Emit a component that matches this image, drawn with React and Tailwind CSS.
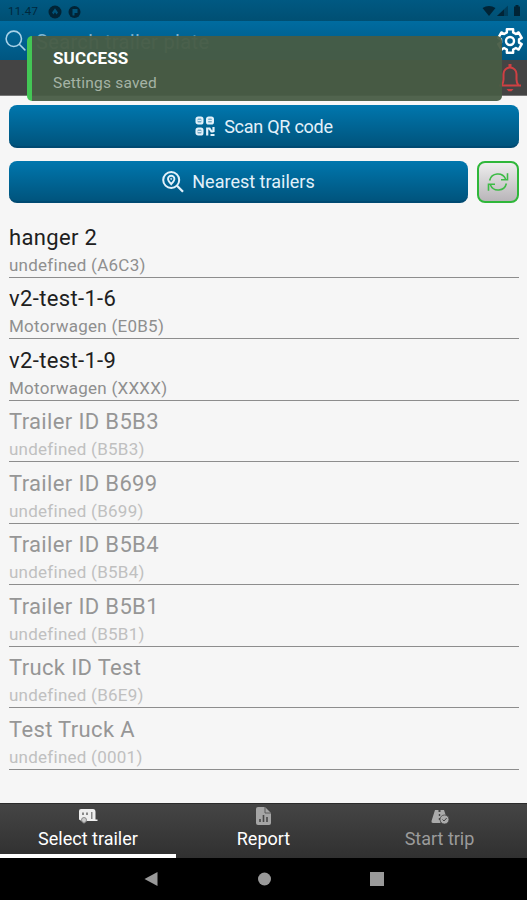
import React from 'react';
import { IoSearchOutline } from 'react-icons/io5';

const trailers = [
  { name: 'hanger 2', info: 'undefined (A6C3)', active: true },
  { name: 'v2-test-1-6', info: 'Motorwagen (E0B5)', active: true },
  { name: 'v2-test-1-9', info: 'Motorwagen (XXXX)', active: true },
  { name: 'Trailer ID B5B3', info: 'undefined (B5B3)' },
  { name: 'Trailer ID B699', info: 'undefined (B699)' },
  { name: 'Trailer ID B5B4', info: 'undefined (B5B4)' },
  { name: 'Trailer ID B5B1', info: 'undefined (B5B1)' },
  { name: 'Truck ID Test', info: 'undefined (B6E9)' },
  { name: 'Test Truck A', info: 'undefined (0001)' },
];

function GearIcon() {
  return (
    <svg width="28" height="30" viewBox="0 0 30 30" fill="none" stroke="#fff" strokeWidth="2.6" strokeLinejoin="round">
      <path d="M18.350 5.790L21.300 7.490 24.190 5.810 27.560 11.630 24.650 13.300V16.700L27.560 18.370 24.190 24.190 21.300 22.510 18.350 24.210 18.370 27.560H11.630L11.650 24.210 8.700 22.510 5.810 24.190 2.440 18.370 5.350 16.700V13.300L2.440 11.630 5.810 5.810 8.700 7.490 11.650 5.790 11.630 2.440H18.370z" />
      <circle cx="15" cy="15" r="4.300" />
    </svg>
  );
}

function BellIcon() {
  return (
    <svg width="26" height="30" viewBox="0 0 26 30" fill="none" stroke="#cf4043" strokeWidth="2">
      <path d="M13 1v3" strokeWidth="3" />
      <path d="M2 22.500h22M4.500 22.500c1.500-2 2-3.500 2-6V11a6.500 6.500 0 0 1 13 0v5.500c0 2.500 0.500 4 2 6" />
      <path d="M9.500 26h7l-2 2.200h-3z" fill="#cf4043" stroke="none" />
    </svg>
  );
}

function QrIcon() {
  return (
    <svg width="20" height="20" viewBox="0 0 20 20" fill="none" stroke="#e3f1fa" strokeWidth="2.200">
      <rect x="1.600" y="1.600" width="5.800" height="5.800" rx="1.500" />
      <rect x="12.100" y="1.600" width="5.800" height="5.800" rx="1.500" />
      <rect x="1.600" y="12.600" width="5.800" height="5.800" rx="1.500" />
      <path d="M2.500 4.500h4M13 4.500h4M2.500 15.500h4" strokeWidth="1.800" />
      <path d="M12.200 19.500v-8M12 12.500h2.500l2 3h2M18.500 11v5M15.500 19h4" />
    </svg>
  );
}

function NearestIcon() {
  return (
    <svg width="22" height="22" viewBox="0 0 22 22" fill="none" stroke="#e3f1fa" strokeWidth="2">
      <circle cx="9.200" cy="9" r="8" />
      <path d="M15 14.800l6 6" strokeWidth="2.300" />
      <path d="M9.200 13.200c-2.200-2.600-3.200-4-3.200-5.300a3.200 3.200 0 0 1 6.400 0c0 1.300-1 2.700-3.200 5.300z" strokeWidth="1.900" />
      <circle cx="9.200" cy="7.900" r="0.600" strokeWidth="1" />
    </svg>
  );
}

function RefreshIcon() {
  return (
    <svg width="22" height="20" viewBox="0 0 22 20" fill="none" stroke="#3dbb46" strokeWidth="1.600">
      <path d="M2.600 8.500a8.500 8.500 0 0 1 16-1.500M19.400 11.500a8.500 8.500 0 0 1-16 1.500" />
      <path d="M20.500 1.200v6.500h-6.500M1.500 18.800v-6.500H8" />
    </svg>
  );
}

function StatusBar() {
  return (
    <div className="h-[21px] flex items-center bg-gradient-to-b from-[#005982] to-[#004f73] px-2 text-[#01283c]">
      <span className="w-[31px] text-[11.500px] leading-none tracking-[0.300px] mt-0.5">11.47</span>
      <svg className="ml-[9px] mt-0.5" width="14" height="14" viewBox="0 0 14 14">
        <circle cx="7" cy="7" r="6.500" fill="#012436" />
        <path d="M7 3.200L10 7.600 8.500 9.500 7 7.200 5.500 9.500 4 7.600z" fill="#00547a" />
      </svg>
      <svg className="ml-[6px] mt-0.5" width="13" height="14" viewBox="0 0 13 14">
        <circle cx="6.500" cy="7" r="6" fill="#012436" />
        <path d="M4.500 4h5v4h-3v2.500h-2z" fill="#00547a" />
      </svg>
      <svg className="ml-auto mr-[-3px]" width="40" height="14" viewBox="0 0 40 14" fill="#012436">
        <path d="M0.500 4Q7 0 13.500 4L7 12z" />
        <path d="M15 12L26 1.500V12z" opacity="0.450" />
        <path d="M15 12L22 5.500V12z" />
        <path d="M32 2.500h1.500V1h3v1.500H38V12h-6z" />
      </svg>
    </div>
  );
}

function Toast() {
  return (
    <div className="absolute left-[27px] top-[36px] w-[475px] h-[65px] rounded-[5px] border-l-[5px] border-[#43c655] bg-[rgba(72,92,69,0.95)] bg-clip-padding pl-[21px] pt-[12px]">
      <div className="text-[17px] leading-[20px] tracking-[0.150px] font-bold text-white">SUCCESS</div>
      <div className="mt-[5px] text-[15.500px] leading-[20px] tracking-[0.200px] text-[#a5b3a5]">Settings saved</div>
    </div>
  );
}

function TrailerRow({ trailer }) {
  return (
    <div className="h-[61.500px] shrink-0 border-b-[1.500px] border-[#8d8d8d] pt-[7.500px]">
      <div className={`text-[22px] leading-[28px] tracking-[0.350px] ${trailer.active ? 'text-[#202020]' : 'text-[#969696]'}`}>{trailer.name}</div>
      <div className={`mt-[3px] text-[17px] leading-[20px] tracking-[0.250px] ${trailer.active ? 'text-[#8f8f8f]' : 'text-[#c0c0c0]'}`}>{trailer.info}</div>
    </div>
  );
}

function TabBar() {
  return (
    <div className="h-[55px] flex bg-gradient-to-b from-[#454545] to-[#303030] border-t border-[#2b2b2b] text-[18px] leading-[22px] text-white">
      <div className="w-[176px] flex flex-col items-center border-b-4 border-white pt-[4px]">
        <svg width="20" height="16" viewBox="0 0 20 16">
          <path d="M3 1h12q2.500 0 2.500 3v7.500H19.500V13H8.500L6 15.500 3.500 13 1 11.500V3q0-2 2-2z" fill="#eee" />
          <path d="M4 4.500h2v2.500H4zM8 4.500h2v2.500H8zM13 4h1.500v7h-1.500z" fill="#888" />
          <circle cx="6" cy="12" r="2.500" fill="#ccc" stroke="#777" strokeWidth="0.800" />
        </svg>
        <span className="mt-[4px]">Select trailer</span>
      </div>
      <div className="w-[175px] flex flex-col items-center pt-[3px]">
        <svg width="15" height="18" viewBox="0 0 15 18">
          <path d="M2 0h7l6 6v10q0 2-2 2H2q-2 0-2-2V2q0-2 2-2z" fill="#a5a5a5" />
          <path d="M9 0v6h6" fill="none" stroke="#5a5a5a" />
          <path d="M4 15v-3M7.500 15V8M11 15v-5" stroke="#484848" strokeWidth="1.600" />
        </svg>
        <span className="mt-[3px]">Report</span>
      </div>
      <div className="flex-1 flex flex-col items-center pt-[5px] pl-px text-[#9b9b9b]">
        <svg width="18" height="15" viewBox="0 0 18 15">
          <path d="M4 1h3.500v2h2V1H13l3 9H9.500v4H2q-2 0-1.500-2z" fill="#aaa" />
          <path d="M8.500 5v2M8.500 9v2" stroke="#444" strokeWidth="1.400" />
          <circle cx="13.500" cy="10.500" r="4.500" fill="#aaa" stroke="#444" strokeWidth="0.800" />
          <path d="M11.500 10.500l1.500 1.500 2.700-3" fill="none" stroke="#444" />
        </svg>
        <span className="mt-[4px]">Start trip</span>
      </div>
    </div>
  );
}

export default function App() {
  return (
    <div className="relative w-[527px] h-[900px] overflow-hidden flex flex-col bg-[#f6f6f6] font-[Roboto,sans-serif]">
      <StatusBar />
      <div className="h-[39px] flex items-center bg-gradient-to-b from-[#006ca0] to-[#005681] pl-[3px] pr-[3px]">
        <IoSearchOutline size={25} className="text-[#a8d2e8]" />
        <span className="ml-[8px] mt-0.5 text-[20px] tracking-[0.350px] text-[#7db3cf]">Search trailer plate</span>
        <span className="ml-auto"><GearIcon /></span>
      </div>
      <div className="h-[36px] flex justify-end items-center bg-[#444] border-b border-[#777] pr-[4px]">
        <BellIcon />
      </div>

      {/* Actions */}
      <div className="pl-[9px] pr-[8px] pt-[9px] flex flex-col gap-[13px] text-[18px] text-[#e3f1fa]">
        <button className="h-[42.500px] w-full rounded-[8px] bg-gradient-to-b from-[#0077ae] to-[#00547d] border-b-2 border-[#004a72] flex items-center justify-center gap-[9px] pt-[2px]">
          <QrIcon />
          <span className="tracking-[-0.250px]">Scan QR code</span>
        </button>
        <div className="flex gap-[9px]">
          <button className="h-[42px] flex-1 rounded-[8px] bg-gradient-to-b from-[#0077ae] to-[#00547d] border-b-2 border-[#004a72] flex items-center justify-center gap-[8px] pt-[2px]">
            <NearestIcon />
            Nearest trailers
          </button>
          <button className="h-[42px] w-[42px] rounded-[8px] border-2 border-[#2fb73a] bg-gradient-to-b from-[#eeeeee] to-[#b9b5b9] flex items-center justify-center">
            <RefreshIcon />
          </button>
        </div>
      </div>

      {/* Trailer list */}
      <div className="flex-1 min-h-0 pl-[9px] pr-[8px] pt-[13.500px] flex flex-col">
        {trailers.map((t) => (
          <TrailerRow key={t.name} trailer={t} />
        ))}
      </div>

      <TabBar />
      <div className="h-[42px] bg-black flex items-center justify-center">
        <svg width="240" height="16" viewBox="0 0 240 16" fill="#999">
          <path d="M0.500 8L13.500 1v14z" />
          <circle cx="120.500" cy="8" r="6.500" />
          <rect x="226" y="1" width="14" height="14" />
        </svg>
      </div>
      <Toast />
    </div>
  );
}
